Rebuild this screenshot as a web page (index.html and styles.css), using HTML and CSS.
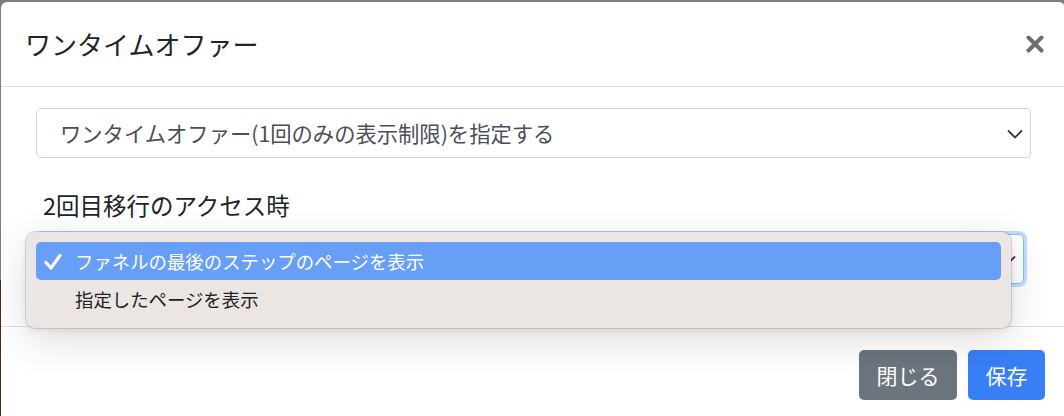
FILE: index.html
```html
<!DOCTYPE html>
<html lang="ja">
<head>
<meta charset="utf-8">
<title>ワンタイムオファー</title>
<link rel="stylesheet" href="styles.css">
</head>
<body>
<div class="backdrop">
  <div class="modal">
    <div class="modal-header">
      <h5 class="modal-title">ワンタイムオファー</h5>
      <button class="close" aria-label="close">
        <svg width="18" height="18" viewBox="0 0 18 18"><path d="M2.5 2.5 L15.5 15.5 M15.5 2.5 L2.5 15.5" stroke="#6e6e6e" stroke-width="4" stroke-linecap="round"/></svg>
      </button>
    </div>
    <div class="modal-body">
      <div class="select">
        <span>ワンタイムオファー(1回のみの表示制限)を指定する</span>
        <svg class="chev" width="16" height="10" viewBox="0 0 16 10"><path d="M1 1.5 L8 8.5 L15 1.5" fill="none" stroke="#343a40" stroke-width="1.8"/></svg>
      </div>
      <label class="label">2回目移行のアクセス時</label>
      <div class="select focus">
        <span></span>
        <svg class="chev" width="16" height="10" viewBox="0 0 16 10"><path d="M1 1.5 L8 8.5 L15 1.5" fill="none" stroke="#343a40" stroke-width="1.8"/></svg>
      </div>
    </div>
    <div class="modal-footer">
      <button class="btn btn-secondary">閉じる</button>
      <button class="btn btn-primary">保存</button>
    </div>
  </div>
  <div class="menu">
    <div class="item active">
      <svg class="check" width="20" height="20" viewBox="0 0 20 20"><path d="M3 10.5 L8 16 L17 3.5" fill="none" stroke="#fff" stroke-width="3.2" stroke-linecap="round" stroke-linejoin="round"/></svg>
      <span>ファネルの最後のステップのページを表示</span>
    </div>
    <div class="item">
      <span>指定したページを表示</span>
    </div>
  </div>
</div>
</body>
</html>
```

FILE: styles.css
```css
* { box-sizing: border-box; }
html, body { margin: 0; padding: 0; }
body {
  width: 1064px;
  height: 416px;
  overflow: hidden;
  background: linear-gradient(to bottom, #7d7d7d 0, #7d7d7d 280px, #4b2a1e 280px);
  font-family: "Noto Sans CJK JP", "Noto Sans", sans-serif;
  color: #212529;
}
.backdrop {
  position: relative;
  padding: 2px 0 0 1px;
  height: 416px;
}
.modal {
  width: 1064px;
  height: 420px;
  background: #fff;
  border-radius: 6px 6px 0 0;
}
.modal-header {
  display: flex;
  align-items: center;
  justify-content: space-between;
  height: 85px;
  padding: 0 21px 0 24px;
  border-bottom: 1px solid #dee2e6;
}
.modal-title {
  margin: 0;
  font-size: 26px;
  font-weight: 400;
  line-height: 40px;
  color: #212529;
}
.close {
  border: 0;
  background: none;
  padding: 0;
  width: 18px;
  height: 18px;
  display: flex;
}
.modal-body {
  padding: 21px 34px 42px 35px;
}
.select {
  position: relative;
  display: flex;
  align-items: center;
  justify-content: space-between;
  height: 50px;
  border: 1px solid #ced4da;
  border-radius: 5px;
  padding: 0 7px 0 23px;
  font-size: 21.3px;
  color: #495057;
  line-height: 30px;
}
.select .chev { margin-top: 1px; }
.label {
  display: block;
  margin-top: 31px;
  margin-bottom: 12px;
  padding-left: 7px;
  font-size: 23.5px;
  line-height: 33px;
  color: #212529;
}
.select.focus {
  width: 988px;
  border-color: #80bdff;
  box-shadow: 0 0 0 3px rgba(0, 123, 255, 0.25);
}
.modal-footer {
  display: flex;
  justify-content: flex-end;
  gap: 11px;
  border-top: 1px solid #dee2e6;
  padding: 23px 20px 0 0;
}
.btn {
  height: 50px;
  border: 0;
  border-radius: 5px;
  font-family: inherit;
  font-size: 21px;
  line-height: 30px;
  color: #fff;
  padding: 0 17px;
}
.btn-secondary { background: #6c757d; width: 98px; }
.btn-primary { background: #387ef5; width: 77px; }
.menu {
  position: absolute;
  left: 26px;
  top: 232px;
  width: 985px;
  height: 96px;
  padding: 10px 10px 0 10px;
  background: #ebe6e3;
  border-radius: 9px;
  box-shadow: 0 0 0 1px rgba(0, 0, 0, 0.12), 0 12px 40px rgba(0, 0, 0, 0.14), 0 2px 6px rgba(0,0,0,0.08);
}
.item {
  display: flex;
  align-items: center;
  height: 38px;
  padding-left: 39px;
  font-size: 18.4px;
  line-height: 24px;
  color: #222;
  border-radius: 5px;
}
.item.active {
  background: #679ff6;
  color: #fff;
  padding-left: 7px;
}
.item .check { margin-right: 12px; margin-top: 2px; }
```
